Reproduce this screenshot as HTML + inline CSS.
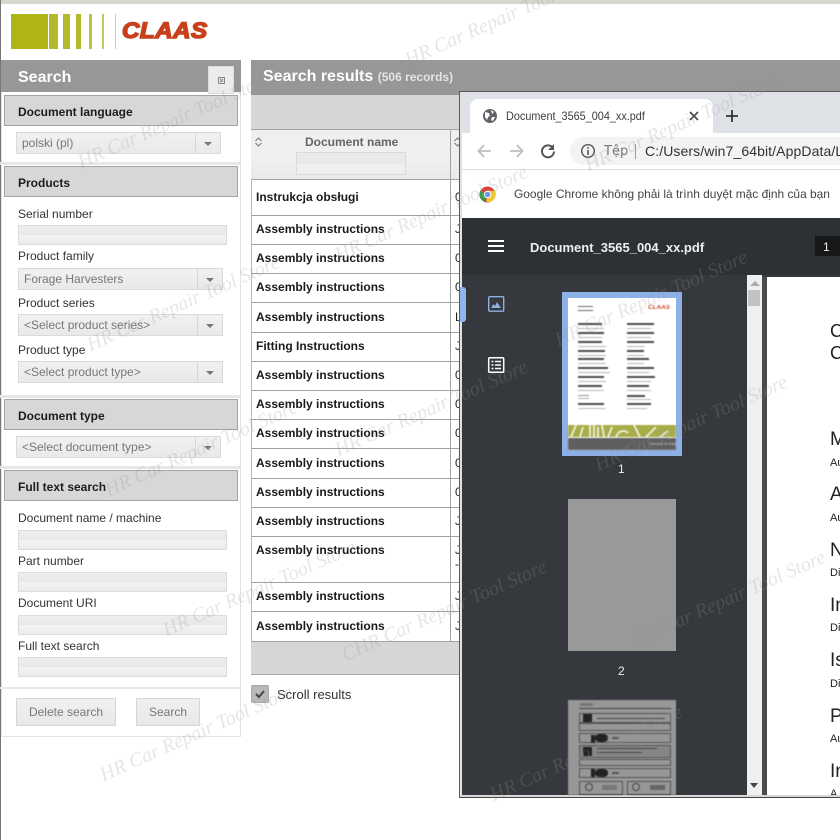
<!DOCTYPE html>
<html><head><meta charset="utf-8">
<style>
html,body{margin:0;padding:0;background:#fff}
#p{position:relative;width:840px;height:840px;overflow:hidden;background:#fff;font-family:"Liberation Sans",Arial,sans-serif;color:#222}
#p div,#p span.a{position:absolute;box-sizing:border-box}
.t{white-space:nowrap;line-height:1}
.hd{background:#d6d7d7;border:1px solid #a4a4a4;left:4px;width:234px;height:31px;font-weight:bold;font-size:12px;padding:9px 0 0 13px;color:#1c1c1c}
.lb{left:18px;font-size:12px;color:#333;white-space:nowrap;line-height:1}
.in{left:18px;width:209px;height:20px;border:1px solid #dcdcdc;background:linear-gradient(#eeeeee 0,#e8e8e8 50%,#f3f3f3 51%,#ebebeb 100%)}
.sel{left:16px;height:22px;border:1px solid #dadada;background:linear-gradient(#f1f1f1,#e9e9e9);font-size:12px;color:#777;padding:3px 0 0 5px;white-space:nowrap}
.sel i{position:absolute;right:0;top:0;width:24px;height:20px;border-left:1px solid #d6d6d6}
.sel i:after{content:"";position:absolute;left:8px;top:9px;border:4px solid transparent;border-top:4px solid #777;border-bottom:0}
.hl{left:0;height:3px;background:#e7e7e7;width:240px}
.r{left:256px;font-size:12px;font-weight:bold;color:#1a1a1a;white-space:nowrap;line-height:1}
.rl{left:251px;width:209px;height:1px;background:#a2a2a2}
.c2{left:455px;font-size:12px;color:#222;line-height:1}
.btn{border:1px solid #d6d6d6;background:linear-gradient(#f0f0f0,#e8e8e8);font-size:12px;color:#777;text-align:center;height:28px;line-height:26px}
.wm{font-family:"Liberation Serif",serif;font-style:italic;font-size:20px;color:rgba(150,150,150,.24);white-space:nowrap;transform:rotate(-24deg);transform-origin:0 100%;line-height:1;z-index:50}
.pg{left:830px;color:#222;line-height:1;white-space:nowrap}
.tl{background:#2a2a2a;height:1px}
.th{filter:blur(.45px)}
.b3{border:1px solid #555}
</style></head><body><div id="p">

<div style="left:0;top:0;width:840px;height:4px;background:#d9d6ce"></div>
<div style="left:0;top:0;width:1px;height:840px;background:#777"></div>

<!-- logo -->
<div style="left:11px;top:14px;width:37px;height:35px;background:#b0b516"></div>
<div style="left:49px;top:14px;width:9px;height:35px;background:#b4b82a"></div>
<div style="left:63px;top:14px;width:7px;height:35px;background:#b4b82a"></div>
<div style="left:76px;top:14px;width:5px;height:35px;background:#b4b82a"></div>
<div style="left:89px;top:14px;width:3px;height:35px;background:#bcbf45"></div>
<div style="left:102px;top:14px;width:2px;height:35px;background:#c6c868"></div>
<div style="left:115px;top:14px;width:1px;height:35px;background:#cfd184"></div>
<div class="t" style="left:122px;top:20px;font-size:22px;font-weight:bold;font-style:italic;color:#c8401a;letter-spacing:.4px;-webkit-text-stroke:1.5px #c8401a;transform-origin:0 0;transform:scaleX(1.1)">CLAAS</div>

<!-- search panel -->
<div style="left:1px;top:60px;width:240px;height:677px;border:1px solid #e2e2e2;border-top:0"></div>
<div style="left:1px;top:60px;width:240px;height:32px;background:#979797"></div>
<div class="t" style="left:18px;top:70px;font-size:16px;font-weight:bold;color:#fff">Search</div>
<div style="left:208px;top:66px;width:26px;height:28px;background:#ececec;border:1px solid #ddd"></div>
<svg style="position:absolute;left:218px;top:77px" width="7" height="7"><rect x=".5" y=".5" width="6" height="6" fill="none" stroke="#888"/><path d="M2 2l3 3M5 2l-3 3" stroke="#888"/></svg>

<div class="hd" style="top:95px">Document language</div>
<div class="sel" style="top:132px;width:205px">polski (pl)<i></i></div>
<div class="hl" style="top:162px"></div>
<div class="hd" style="top:166px">Products</div>
<div class="lb" style="top:208px">Serial number</div>
<div class="in" style="top:225px"></div>
<div class="lb" style="top:250px">Product family</div>
<div class="sel" style="top:268px;left:18px;width:205px">Forage Harvesters<i></i></div>
<div class="lb" style="top:297px">Product series</div>
<div class="sel" style="top:314px;left:18px;width:205px">&lt;Select product series&gt;<i></i></div>
<div class="lb" style="top:344px">Product type</div>
<div class="sel" style="top:361px;left:18px;width:205px">&lt;Select product type&gt;<i></i></div>
<div class="hl" style="top:395px"></div>
<div class="hd" style="top:399px">Document type</div>
<div class="sel" style="top:436px;width:205px">&lt;Select document type&gt;<i></i></div>
<div class="hl" style="top:466px"></div>
<div class="hd" style="top:470px">Full text search</div>
<div class="lb" style="top:512px">Document name / machine</div>
<div class="in" style="top:530px"></div>
<div class="lb" style="top:555px">Part number</div>
<div class="in" style="top:572px"></div>
<div class="lb" style="top:597px">Document URI</div>
<div class="in" style="top:615px"></div>
<div class="lb" style="top:640px">Full text search</div>
<div class="in" style="top:657px"></div>
<div class="hl" style="top:687px;height:2px"></div>
<div class="btn" style="left:16px;top:698px;width:100px">Delete search</div>
<div class="btn" style="left:136px;top:698px;width:64px">Search</div>

<!-- results -->
<div style="left:251px;top:60px;width:589px;height:35px;background:#979797"></div>
<div class="t" style="left:263px;top:69px;font-size:16px;font-weight:bold;color:#fff">Search results <span style="font-size:12px;color:#e4e4e4">(506 records)</span></div>
<div style="left:251px;top:95px;width:210px;height:34px;background:#d6d6d6"></div>
<div style="left:251px;top:129px;width:210px;height:51px;background:linear-gradient(#efefef,#f0f0f0 60%,#e9e9e9);border-top:1px solid #a2a2a2;border-bottom:1px solid #a2a2a2"></div>
<div class="t" style="left:305px;top:136px;font-size:12px;font-weight:bold;color:#666">Document name</div>
<svg style="position:absolute;left:254px;top:136px" width="9" height="12"><path d="M1.500 5L4.500 2l3 3M1.500 7l3 3 3-3" fill="none" stroke="#777" stroke-width="1"/></svg>
<svg style="position:absolute;left:453px;top:136px" width="7" height="12"><path d="M1.500 5L4.500 2l3 3M1.500 7l3 3 3-3" fill="none" stroke="#777" stroke-width="1"/></svg>
<div style="left:296px;top:152px;width:110px;height:23px;border:1px solid #dadada;background:linear-gradient(#ebebeb,#e8e8e8 50%,#f0f0f0 51%,#eeeeee)"></div>
<div style="left:251px;top:180px;width:1px;height:495px;background:#bbb"></div>
<div style="left:450px;top:129px;width:1px;height:512px;background:#a2a2a2"></div>

<div class="rl" style="top:215px"></div><div class="rl" style="top:244px"></div><div class="rl" style="top:273px"></div><div class="rl" style="top:302px"></div><div class="rl" style="top:332px"></div><div class="rl" style="top:361px"></div><div class="rl" style="top:390px"></div><div class="rl" style="top:419px"></div><div class="rl" style="top:448px"></div><div class="rl" style="top:478px"></div><div class="rl" style="top:507px"></div><div class="rl" style="top:536px"></div><div class="rl" style="top:582px"></div><div class="rl" style="top:611px"></div><div class="rl" style="top:641px"></div>

<div class="r" style="top:191px">Instrukcja obsługi</div>
<div class="r" style="top:223px">Assembly instructions</div>
<div class="r" style="top:252px">Assembly instructions</div>
<div class="r" style="top:281px">Assembly instructions</div>
<div class="r" style="top:311px">Assembly instructions</div>
<div class="r" style="top:340px">Fitting Instructions</div>
<div class="r" style="top:369px">Assembly instructions</div>
<div class="r" style="top:398px">Assembly instructions</div>
<div class="r" style="top:427px">Assembly instructions</div>
<div class="r" style="top:457px">Assembly instructions</div>
<div class="r" style="top:486px">Assembly instructions</div>
<div class="r" style="top:515px">Assembly instructions</div>
<div class="r" style="top:544px">Assembly instructions</div>
<div class="r" style="top:590px">Assembly instructions</div>
<div class="r" style="top:620px">Assembly instructions</div>

<div class="c2" style="top:191px">0</div><div class="c2" style="top:223px">J</div><div class="c2" style="top:252px">0</div><div class="c2" style="top:281px">0</div><div class="c2" style="top:311px">L</div><div class="c2" style="top:340px">J</div><div class="c2" style="top:369px">0</div><div class="c2" style="top:398px">0</div><div class="c2" style="top:427px">0</div><div class="c2" style="top:457px">0</div><div class="c2" style="top:486px">0</div><div class="c2" style="top:515px">J</div><div class="c2" style="top:544px">J</div><div class="c2" style="top:558px">-</div><div class="c2" style="top:590px">J</div><div class="c2" style="top:620px">J</div>

<div style="left:251px;top:642px;width:209px;height:33px;background:#d6d6d6;border-bottom:1px solid #aaa"></div>
<div style="left:251px;top:685px;width:18px;height:18px;background:#b9b9b9;border:1px solid #a8a8a8;border-radius:2px"></div>
<svg style="position:absolute;left:251px;top:685px" width="18" height="18"><path d="M5 9l3 3 5-6" fill="none" stroke="#444" stroke-width="2"/></svg>
<div class="t" style="left:277px;top:688px;font-size:13px;color:#333">Scroll results</div>

<!-- browser window -->
<div style="left:459px;top:91px;width:381px;height:707px;background:#dee1e6;border:1px solid #5a5a5a;border-right:0;border-bottom:0"></div>
<div style="left:460px;top:795px;width:380px;height:3px;background:#d8d8d8;border-bottom:1px solid #444"></div>
<div style="left:470px;top:99px;width:243px;height:34px;background:#fff;border-radius:8px 8px 0 0"></div>
<div style="left:462px;top:133px;width:378px;height:86px;background:#fff"></div>
<svg style="position:absolute;left:482px;top:108px" width="16" height="16" viewBox="0 0 16 16"><circle cx="8" cy="8" r="7" fill="#5f6368"/><path d="M3 4l4 1 1 3-2 1-1 3-2-3zM9 2l3 2-2 2zM10 9l3 0-2 4-2-1z" fill="#fff"/></svg>
<div class="t" style="left:506px;top:110px;font-size:12px;color:#3c4043;transform-origin:0 0;transform:scaleX(.905)">Document_3565_004_xx.pdf</div>
<svg style="position:absolute;left:687px;top:109px" width="14" height="14"><path d="M3 3l8 8M11 3l-8 8" stroke="#444" stroke-width="1.600"/></svg>
<svg style="position:absolute;left:724px;top:108px" width="16" height="16"><path d="M8 2v12M2 8h12" stroke="#333" stroke-width="1.800"/></svg>

<svg style="position:absolute;left:475px;top:142px" width="20" height="18"><path d="M16 9H4M9 3L3.500 9 9 15" fill="none" stroke="#bcc0c4" stroke-width="1.800"/></svg>
<svg style="position:absolute;left:507px;top:142px" width="20" height="18"><path d="M3 9h12M10 3l5.500 6L10 15" fill="none" stroke="#bcc0c4" stroke-width="1.800"/></svg>
<svg style="position:absolute;left:539px;top:142px" width="18" height="18"><path d="M14 6A6 6 0 1 0 15 9.500" fill="none" stroke="#555" stroke-width="2"/><path d="M15 2v6H9z" fill="#555"/></svg>
<div style="left:570px;top:137px;width:270px;height:28px;background:#f1f3f4;border-radius:14px 0 0 14px"></div>
<svg style="position:absolute;left:580px;top:143px" width="16" height="16"><circle cx="8" cy="8" r="6.300" fill="none" stroke="#555" stroke-width="1.400"/><path d="M8 7v5M8 4v1.600" stroke="#555" stroke-width="1.600"/></svg>
<div class="t" style="left:604px;top:145px;color:#777;font-family:'DejaVu Sans','Liberation Sans',sans-serif;font-size:13px">Tệp</div>
<div style="left:635px;top:144px;width:1px;height:15px;background:#999"></div>
<div class="t" style="left:645px;top:144px;font-size:14px;color:#333;letter-spacing:.1px">C:/Users/win7_64bit/AppData/L</div>
<div style="left:462px;top:169px;width:378px;height:1px;background:#ddd"></div>

<svg style="position:absolute;left:479px;top:186px" width="17" height="17" viewBox="0 0 18 18"><circle cx="9" cy="9" r="8.500" fill="#d8433a"/><path d="M9 9L1.500 5A8.500 8.500 0 0 0 6 17z" fill="#3a9a4c"/><path d="M9 5h8a8.500 8.500 0 0 1-9 12z" fill="#f2c835"/><circle cx="9" cy="9" r="4" fill="#fff"/><circle cx="9" cy="9" r="3" fill="#6f9ce0"/></svg>
<div class="t" style="left:514px;top:188px;font-size:12px;color:#444;transform-origin:0 0;transform:scaleX(.995)">Google Chrome không phải là trình duyệt mặc định của bạn</div>

<!-- pdf toolbar -->
<div style="left:462px;top:218px;width:378px;height:57px;background:#2e3134"></div>
<div style="left:488px;top:240px;width:16px;height:2px;background:#fff"></div>
<div style="left:488px;top:245px;width:16px;height:2px;background:#fff"></div>
<div style="left:488px;top:250px;width:16px;height:2px;background:#fff"></div>
<div class="t" style="left:530px;top:241px;font-size:13px;font-weight:bold;color:#eee">Document_3565_004_xx.pdf</div>
<div style="left:815px;top:236px;width:25px;height:20px;background:#16181a"></div>
<div class="t" style="left:823px;top:241px;font-size:12px;color:#eee">1</div>

<div style="left:462px;top:275px;width:285px;height:520px;background:#35383c"></div>
<div style="left:460px;top:287px;width:6px;height:35px;background:#8fb4ee;border-radius:0 3px 3px 0"></div>
<svg style="position:absolute;left:487px;top:295px" width="18" height="18"><rect x="1.700" y="1.700" width="15" height="14.500" rx="1" fill="none" stroke="#8fb0e0" stroke-width="1.400"/><path d="M4 13l2.500-4 1.500 2 2-4 4 6z" fill="#8fb0e0"/></svg>
<svg style="position:absolute;left:487px;top:356px" width="18" height="18"><rect x="1.700" y="1.700" width="15" height="14.500" rx="1" fill="none" stroke="#fff" stroke-width="1.500"/><path d="M4.500 5.500h2M8 5.500h6M4.500 9h2M8 9h6M4.500 12.500h2M8 12.500h6" stroke="#fff" stroke-width="1.400"/></svg>

<!-- thumb 1 -->
<div style="left:562px;top:292px;width:120px;height:164px;background:#8db0e6"></div>
<div style="left:568px;top:298px;width:108px;height:152px;background:#fff"></div>
<div class="th" style="left:568px;top:298px;width:108px;height:152px;overflow:hidden">
<div class="t" style="left:80px;top:7px;font-size:6px;font-weight:bold;font-style:italic;color:#c8401a;letter-spacing:.3px">CLAAS</div>
<div class="tl" style="left:10px;top:8px;width:15px;opacity:.7"></div>
<div class="tl" style="left:10px;top:12px;width:15px;opacity:.7"></div>
<div class="tl" style="left:10px;top:25px;width:24px;opacity:.85;height:2px"></div><div class="tl" style="left:10px;top:30px;width:26px;opacity:.35"></div>
<div class="tl" style="left:10px;top:34px;width:26px;opacity:.85;height:2px"></div><div class="tl" style="left:10px;top:39px;width:24px;opacity:.35"></div>
<div class="tl" style="left:10px;top:43px;width:24px;opacity:.85;height:2px"></div><div class="tl" style="left:10px;top:48px;width:28px;opacity:.35"></div>
<div class="tl" style="left:10px;top:52px;width:27px;opacity:.85;height:2px"></div><div class="tl" style="left:10px;top:57px;width:28px;opacity:.35"></div>
<div class="tl" style="left:10px;top:60px;width:26px;opacity:.85;height:2px"></div><div class="tl" style="left:10px;top:65px;width:28px;opacity:.35"></div>
<div class="tl" style="left:10px;top:69px;width:30px;opacity:.85;height:2px"></div><div class="tl" style="left:10px;top:74px;width:32px;opacity:.35"></div>
<div class="tl" style="left:10px;top:78px;width:26px;opacity:.85;height:2px"></div><div class="tl" style="left:10px;top:83px;width:28px;opacity:.35"></div>
<div class="tl" style="left:10px;top:87px;width:24px;opacity:.85;height:2px"></div><div class="tl" style="left:10px;top:92px;width:26px;opacity:.35"></div>
<div class="tl" style="left:10px;top:97px;width:11px;opacity:.5"></div><div class="tl" style="left:10px;top:100px;width:11px;opacity:.4"></div>
<div class="tl" style="left:10px;top:105px;width:26px;opacity:.85;height:2px"></div><div class="tl" style="left:10px;top:110px;width:28px;opacity:.35"></div>
<div class="tl" style="left:59px;top:25px;width:27px;opacity:.85;height:2px"></div><div class="tl" style="left:59px;top:30px;width:24px;opacity:.35"></div>
<div class="tl" style="left:59px;top:34px;width:27px;opacity:.85;height:2px"></div><div class="tl" style="left:59px;top:39px;width:24px;opacity:.35"></div>
<div class="tl" style="left:59px;top:43px;width:27px;opacity:.85;height:2px"></div><div class="tl" style="left:59px;top:48px;width:18px;opacity:.35"></div>
<div class="tl" style="left:59px;top:52px;width:17px;opacity:.85;height:2px"></div><div class="tl" style="left:59px;top:57px;width:17px;opacity:.35"></div>
<div class="tl" style="left:59px;top:60px;width:22px;opacity:.85;height:2px"></div><div class="tl" style="left:59px;top:65px;width:17px;opacity:.35"></div>
<div class="tl" style="left:59px;top:69px;width:27px;opacity:.85;height:2px"></div><div class="tl" style="left:59px;top:74px;width:22px;opacity:.35"></div>
<div class="tl" style="left:59px;top:78px;width:28px;opacity:.85;height:2px"></div><div class="tl" style="left:59px;top:83px;width:24px;opacity:.35"></div>
<div class="tl" style="left:59px;top:87px;width:22px;opacity:.85;height:2px"></div><div class="tl" style="left:59px;top:92px;width:24px;opacity:.35"></div>
<div class="tl" style="left:59px;top:97px;width:18px;opacity:.85;height:2px"></div><div class="tl" style="left:59px;top:101px;width:24px;opacity:.35"></div>
<div class="tl" style="left:59px;top:105px;width:24px;opacity:.85;height:2px"></div><div class="tl" style="left:59px;top:110px;width:20px;opacity:.35"></div>
<div style="left:0;top:127px;width:108px;height:12px;background:#a9ad49"></div>
<svg style="position:absolute;left:0;top:127px" width="108" height="12"><path d="M3 12L8 0M12 12l3-10M22 0v12M26 0v12M30 2v10M34 0l2 12M40 12l4-10M48 12c2-6 8-8 12-4M66 0l6 12M78 12l10-10M92 12l8-6" stroke="#eef0dc" stroke-width="1.800" fill="none"/></svg>
<div style="left:0;top:140px;width:108px;height:12px;background:#5f5f5f"></div>
<div class="t" style="left:82px;top:144px;font-size:4px;color:#ccc">Service &amp; Parts</div>
</div>
<div class="t" style="left:618px;top:463px;font-size:12px;color:#eee">1</div>

<!-- thumb 2 -->
<div style="left:568px;top:499px;width:108px;height:152px;background:#999"></div>
<div class="t" style="left:618px;top:665px;font-size:12px;color:#eee">2</div>

<!-- thumb 3 -->
<div class="th" style="left:568px;top:700px;width:108px;height:95px;background:#979797;overflow:hidden">
<div style="left:12px;top:3px;width:13px;height:3px;background:#777"></div>
<div style="left:11px;top:8px;width:92px;height:1px;background:#444"></div>
<div class="b3" style="left:11px;top:13px;width:92px;height:10px"></div>
<div style="left:15px;top:14px;width:9px;height:8px;background:#222"></div>
<div style="left:29px;top:18px;width:68px;height:1px;background:#444"></div>
<div class="b3" style="left:11px;top:23px;width:92px;height:8px"></div>
<div class="b3" style="left:11px;top:33px;width:92px;height:10px"></div>
<div style="left:23px;top:35px;width:4px;height:8px;background:#222"></div>
<div style="left:27px;top:34px;width:13px;height:8px;background:#222;border-radius:40%;left:27px"></div>
<div style="left:44px;top:37px;width:7px;height:2px;background:#555"></div>
<div class="b3" style="left:11px;top:45px;width:92px;height:13px;background:#868686"></div>
<div style="left:15px;top:47px;width:9px;height:9px;background:#222"></div>
<div style="left:29px;top:48px;width:60px;height:1px;background:#444"></div>
<div style="left:29px;top:52px;width:45px;height:1px;background:#444"></div>
<div class="b3" style="left:11px;top:59px;width:92px;height:7px"></div>
<div class="b3" style="left:11px;top:68px;width:92px;height:10px"></div>
<div style="left:23px;top:69px;width:4px;height:8px;background:#222"></div>
<div style="left:27px;top:69px;width:13px;height:8px;background:#222;border-radius:40%"></div>
<div style="left:44px;top:72px;width:7px;height:2px;background:#555"></div>
<div class="b3" style="left:11px;top:81px;width:44px;height:14px"></div>
<div class="b3" style="left:59px;top:81px;width:44px;height:14px"></div>
<div style="left:17px;top:83px;width:8px;height:8px;border:1px solid #444;border-radius:50%"></div>
<div style="left:64px;top:83px;width:8px;height:8px;border:1px solid #444;border-radius:50%"></div>
<div style="left:34px;top:85px;width:15px;height:5px;background:#777"></div>
<div style="left:82px;top:85px;width:15px;height:5px;background:#666"></div>
</div>

<!-- scrollbar and page -->
<div style="left:747px;top:275px;width:15px;height:520px;background:#eef0ef"></div>
<div style="left:748px;top:290px;width:12px;height:16px;background:#c2c2c2"></div>
<div style="left:750px;top:281px;border:5px solid transparent;border-bottom:5px solid #aaa;border-top:0"></div>
<div style="left:750px;top:783px;border:4px solid transparent;border-top:5px solid #444;border-bottom:0"></div>
<div style="left:762px;top:275px;width:5px;height:520px;background:#484a4c"></div>
<div style="left:767px;top:277px;width:73px;height:518px;background:#fff"></div>
<div style="left:762px;top:275px;width:78px;height:2px;background:#35383c"></div>

<div class="pg" style="top:322px;font-size:18px">C</div>
<div class="pg" style="top:344px;font-size:18px">C</div>
<div class="pg" style="top:430px;font-size:19px">M</div>
<div class="pg" style="top:458px;font-size:11px">Au</div>
<div class="pg" style="top:485px;font-size:19px">A</div>
<div class="pg" style="top:513px;font-size:11px">Au</div>
<div class="pg" style="top:541px;font-size:19px">N</div>
<div class="pg" style="top:568px;font-size:11px">Di</div>
<div class="pg" style="top:596px;font-size:19px">In</div>
<div class="pg" style="top:623px;font-size:11px">Di</div>
<div class="pg" style="top:651px;font-size:19px">Is</div>
<div class="pg" style="top:679px;font-size:11px">Di</div>
<div class="pg" style="top:707px;font-size:19px">P</div>
<div class="pg" style="top:734px;font-size:11px">Au</div>
<div class="pg" style="top:762px;font-size:19px">In</div>
<div class="pg" style="top:789px;font-size:11px;height:6px;overflow:hidden">A</div>

<!-- watermarks -->
<div class="wm" style="left:83px;top:152px">HR Car Repair Tool Store</div>
<div class="wm" style="left:340px;top:245px">HR Car Repair Tool Store</div>
<div class="wm" style="left:92px;top:335px">HR Car Repair Tool Store</div>
<div class="wm" style="left:340px;top:440px">HR Car Repair Tool Store</div>
<div class="wm" style="left:110px;top:480px">HR Car Repair Tool Store</div>
<div class="wm" style="left:168px;top:620px">HR Car Repair Tool Store</div>
<div class="wm" style="left:347px;top:645px">CHR Car Repair Tool Store</div>
<div class="wm" style="left:105px;top:765px">HR Car Repair Tool Store</div>
<div class="wm" style="left:410px;top:50px">HR Car Repair Tool Store</div>
<div class="wm" style="left:590px;top:155px">HR Car Repair Tool Store</div>
<div class="wm" style="left:560px;top:330px">HR Car Repair Tool Store</div>
<div class="wm" style="left:600px;top:455px">HR Car Repair Tool Store</div>
<div class="wm" style="left:638px;top:630px">HR Car Repair Tool Store</div>
<div class="wm" style="left:495px;top:785px">HR Car Repair Tool Store</div>
</div></body></html>
